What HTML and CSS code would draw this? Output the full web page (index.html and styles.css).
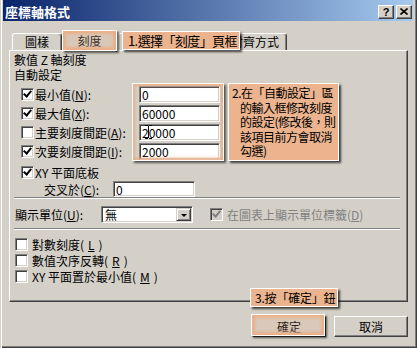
FILE: index.html
```html
<!DOCTYPE html>
<html>
  <head>
    <meta charset="utf-8">
    <title>座標軸格式</title>
    <link rel="stylesheet" href="styles.css">
  </head>
  <body>
    <div class="window">
      <div class="titlebar">
        <span class="title">座標軸格式</span>
        <div class="title-buttons">
          <span class="title-btn">?</span>
          <span class="title-btn">
            <svg width="8" height="7" viewBox="0 0 8 7">
              <path d="M0.5 0.5 L7.5 6.5 M7.5 0.5 L0.5 6.5" stroke="#000" stroke-width="1.6" fill="none"/>
            </svg>
          </span>
        </div>
      </div>

      <div class="tabs">
        <div class="tab tab-1">圖樣</div>
        <div class="tab tab-2 active">刻度</div>
        <div class="tab tab-3"></div>
        <div class="tab tab-4"></div>
        <div class="tab tab-5">對齊方式</div>
      </div>

      <div class="panel">
        <div class="line">數值 Z 軸刻度</div>
        <div class="line">自動設定</div>

        <div class="auto-group">
          <div class="row">
            <span class="cb on"></span>
            <span class="lbl">最小值(<u>N</u>):</span>
            <input class="txt" type="text" value="0">
          </div>
          <div class="row">
            <span class="cb on"></span>
            <span class="lbl">最大值(<u>X</u>):</span>
            <input class="txt" type="text" value="60000">
          </div>
          <div class="row">
            <span class="cb"></span>
            <span class="lbl">主要刻度間距(<u>A</u>):</span>
            <input class="txt" type="text" value="20000">
          </div>
          <div class="row">
            <span class="cb on"></span>
            <span class="lbl">次要刻度間距(<u>I</u>):</span>
            <input class="txt" type="text" value="2000">
          </div>
        </div>

        <div class="row xy-row">
          <span class="cb on"></span>
          <span class="lbl">XY 平面底板</span>
        </div>
        <div class="row cross-row">
          <span class="cross-lbl">交叉於(<u>C</u>):</span>
          <input class="txt cross-txt" type="text" value="0">
        </div>

        <div class="sep"></div>

        <div class="unit-row">
          <span class="unit-lbl">顯示單位(<u>U</u>):</span>
          <div class="select">
            <span class="select-val">無</span>
            <span class="drop"><span class="arrow"></span></span>
          </div>
          <span class="cb on disabled"></span>
          <span class="disabled-lbl">在圖表上顯示單位標籤(<u>D</u>)</span>
        </div>

        <div class="sep"></div>

        <div class="opt-group">
          <div class="opt"><span class="cb"></span>對數刻度(<u>L</u>)</div>
          <div class="opt"><span class="cb"></span>數值次序反轉(<u>R</u>)</div>
          <div class="opt"><span class="cb"></span>XY 平面置於最小值(<u>M</u>)</div>
        </div>
      </div>

      <div class="buttons">
        <button class="btn">確定</button>
        <button class="btn">取消</button>
      </div>

      <!-- tutorial highlights -->
      <div class="glow glow-tab"></div>
      <div class="glow glow-inputs"></div>
      <div class="glow glow-ok"></div>

      <svg class="ibeam" width="7" height="14" viewBox="0 0 7 14">
        <path d="M0 0.5 H3 M4 0.5 H7 M3.5 1 V13 M0 13.5 H3 M4 13.5 H7" stroke="#000" stroke-width="1" fill="none"/>
      </svg>

      <div class="callout callout-1">1.選擇「刻度」頁框</div>
      <div class="callout callout-2">
        <div>2.在「自動設定」區</div>
        <div class="indent">的輸入框修改刻度</div>
        <div class="indent">的設定(修改後，則</div>
        <div class="indent">該項目前方會取消</div>
        <div class="indent">勾選)</div>
      </div>
      <div class="callout callout-3">3.按「確定」鈕</div>
    </div>
  </body>
</html>
```

FILE: styles.css
```css
body {
  margin: 0;
  background-color: #d4d0c8;
  font-family: "Noto Sans CJK TC", sans-serif;
  font-size: 12px;
  color: #000;
}

.window {
  position: relative;
  box-sizing: border-box;
  width: 417px;
  height: 348px;
  padding: 0 4px 3px 3px;
  background-color: #d4d0c8;
  box-shadow: inset 1px 0 #d4d0c8, inset 2px 0 #fff, inset -1px -1px #404040,
    inset -2px -2px #808080;
}

/* title bar */
.titlebar {
  display: flex;
  align-items: center;
  justify-content: space-between;
  box-sizing: border-box;
  height: 21px;
  padding: 2px 1px 0 2px;
  background: linear-gradient(to right, #0a246a, #a6caf0);
}

.title {
  color: #fff;
  font-weight: bold;
  font-size: 13px;
  line-height: 15px;
}

.title-buttons {
  display: flex;
  gap: 2px;
}

.title-btn {
  display: flex;
  align-items: center;
  justify-content: center;
  box-sizing: border-box;
  width: 16px;
  height: 14px;
  background-color: #d4d0c8;
  border: 1px solid;
  border-color: #fff #404040 #404040 #fff;
  box-shadow: inset -1px -1px #808080;
  font: bold 11px "Liberation Sans", sans-serif;
  line-height: 12px;
}

/* tabs */
.tabs {
  position: relative;
  z-index: 1;
  display: flex;
  align-items: flex-end;
  height: 19px;
  margin: 10px 0 0 9px;
}

.tab {
  box-sizing: border-box;
  height: 17px;
  background-color: #d4d0c8;
  border-top: 1px solid #fff;
  border-left: 1px solid #fff;
  border-right: 1px solid #404040;
  border-radius: 3px 3px 0 0;
  box-shadow: inset -1px 0 #808080;
  text-align: center;
  line-height: 16px;
}

.tab-1 { width: 50px; }
.tab-2 { width: 55px; }
.tab-3 { width: 53px; }
.tab-4 { width: 53px; }
.tab-5 { width: 64px; }

.tab.active {
  height: 21px;
  margin-bottom: -2px;
  line-height: 18px;
}

/* main panel */
.panel {
  box-sizing: border-box;
  width: 399px;
  height: 252px;
  margin-left: 6px;
  padding: 1px 4px 0 4px;
  border-top: 1px solid #fff;
  border-left: 1px solid #fff;
  border-right: 1px solid #404040;
  border-bottom: 1px solid #404040;
  box-shadow: inset -1px -1px #808080;
}

.line {
  height: 15px;
  line-height: 15px;
}

.auto-group {
  margin-top: 3px;
}

.row {
  display: flex;
  align-items: center;
  height: 19px;
  padding-left: 7px;
}

.cb {
  position: relative;
  flex: none;
  box-sizing: border-box;
  width: 13px;
  height: 13px;
  background-color: #fff;
  border: 1px solid;
  border-color: #808080 #fff #fff #808080;
  box-shadow: inset 1px 1px #404040, inset -1px -1px #d4d0c8;
}

.cb.on::after {
  content: "";
  position: absolute;
  left: 3px;
  top: 0;
  width: 3px;
  height: 6px;
  border: solid #000;
  border-width: 0 2px 2px 0;
  transform: rotate(40deg);
}

.cb.disabled {
  background-color: #d4d0c8;
}

.cb.disabled::after {
  border-color: #808080;
}

.lbl {
  width: 104px;
  margin-left: 1px;
  white-space: nowrap;
}

.txt {
  box-sizing: border-box;
  width: 81px;
  height: 17px;
  margin: 0;
  padding: 0 2px;
  background-color: #fff;
  border: 1px solid;
  border-color: #808080 #fff #fff #808080;
  box-shadow: inset 1px 1px #404040, inset -1px -1px #d4d0c8;
  font: inherit;
  color: #000;
  outline: none;
}

.xy-row {
  height: 17px;
  margin-top: 3px;
}

.cross-row {
  height: 16px;
  padding-left: 30px;
}

.cross-lbl {
  width: 69px;
}

.cross-txt {
  width: 82px;
  height: 16px;
}

.sep {
  height: 0;
  margin-right: 3px;
  border-top: 1px solid #808080;
  border-bottom: 1px solid #fff;
}

.panel .sep:first-of-type {
  margin-top: 6px;
}

.unit-row {
  display: flex;
  align-items: center;
  height: 18px;
  margin: 6px 0 5px 1px;
}

.unit-lbl {
  width: 86px;
}

.select {
  display: flex;
  box-sizing: border-box;
  width: 92px;
  height: 17px;
  padding: 1px;
  background-color: #fff;
  border: 1px solid;
  border-color: #808080 #fff #fff #808080;
  box-shadow: inset 1px 1px #404040, inset -1px -1px #d4d0c8;
  margin-right: 17px;
}

.select-val {
  flex: 1;
  padding-left: 2px;
  line-height: 13px;
}

.drop {
  display: flex;
  align-items: center;
  justify-content: center;
  box-sizing: border-box;
  width: 15px;
  height: 13px;
  background-color: #d4d0c8;
  border: 1px solid;
  border-color: #d4d0c8 #404040 #404040 #d4d0c8;
  box-shadow: inset 1px 1px #fff, inset -1px -1px #808080;
}

.arrow {
  width: 0;
  height: 0;
  border-left: 3px solid transparent;
  border-right: 3px solid transparent;
  border-top: 3px solid #000;
  margin-top: 2px;
}

.disabled-lbl {
  margin-left: 4px;
  color: #808080;
}

.opt-group {
  margin-top: 6px;
}

.opt {
  display: flex;
  align-items: center;
  gap: 4px;
  height: 16px;
  padding-left: 1px;
}

/* dialog buttons */
.buttons {
  display: flex;
  justify-content: flex-end;
  gap: 8px;
  margin: 14px 5px 0 0;
}

.btn {
  box-sizing: border-box;
  width: 74px;
  height: 21px;
  padding: 0;
  background-color: #d4d0c8;
  border: 1px solid;
  border-color: #fff #404040 #404040 #fff;
  box-shadow: inset -1px -1px #808080;
  font: inherit;
  color: #000;
}

/* tutorial overlays */
.glow {
  position: absolute;
  z-index: 2;
  box-sizing: border-box;
  border: 1px solid #fff;
  box-shadow: inset 0 0 3px 3px #e9b089, 2px 2px 2px rgba(0, 0, 0, 0.6);
}

.glow-tab {
  left: 62px;
  top: 30px;
  width: 55px;
  height: 21px;
  background-color: rgba(233, 176, 137, 0.25);
}

.glow-inputs {
  left: 132px;
  top: 83px;
  width: 92px;
  height: 78px;
  box-shadow: inset 0 0 3px 2px #e9b089, 2px 2px 2px rgba(0, 0, 0, 0.6);
}

.glow-ok {
  left: 251px;
  top: 314px;
  width: 74px;
  height: 22px;
  background-color: rgba(233, 176, 137, 0.2);
}

.ibeam {
  position: absolute;
  z-index: 2;
  left: 145px;
  top: 125px;
}

.callout {
  position: absolute;
  z-index: 3;
  box-sizing: border-box;
  background-color: #ebb48f;
  border: 1px solid #fff;
  box-shadow: 2px 2px 2px rgba(0, 0, 0, 0.7);
  white-space: nowrap;
  letter-spacing: -0.2px;
}

.callout-1 {
  left: 122px;
  top: 31px;
  width: 118px;
  height: 19px;
  padding-left: 5px;
  line-height: 17px;
  font-size: 13px;
  letter-spacing: -0.6px;
}

.callout-2 {
  left: 228px;
  top: 83px;
  width: 111px;
  height: 78px;
  padding: 2px 0 0 3px;
  line-height: 14.5px;
  letter-spacing: -0.5px;
}

.callout-2 .indent {
  padding-left: 8px;
}

.callout-3 {
  left: 250px;
  top: 288px;
  width: 88px;
  height: 19px;
  padding-left: 4px;
  line-height: 17px;
}
```
